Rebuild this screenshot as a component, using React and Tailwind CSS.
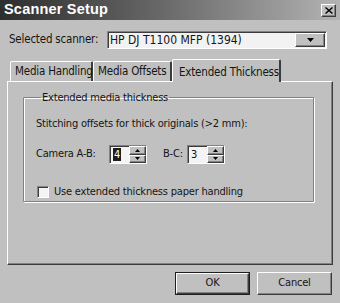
import React from 'react';

const raised =
  'border border-t-white border-l-white border-r-[#3c3c3c] border-b-[#3c3c3c] shadow-[inset_-1px_-1px_0_#828282]';
const sunken =
  'border border-t-[#828282] border-l-[#828282] border-r-white border-b-white shadow-[inset_1px_1px_0_#3c3c3c]';

function Spinner({ value, selected }) {
  return (
    <div className={`flex w-[38px] h-[19px] bg-[#f4f4f4] ${sunken}`}>
      <div className="flex-1 flex items-center pl-[3px]">
        <span className={selected ? 'bg-[#1e1e1e] text-white px-[1px] leading-[13px]' : 'leading-[13px]'}>
          {value}
        </span>
      </div>
      <div className="w-[17px] flex flex-col">
        <div className={`flex-1 bg-[#c0c0c0] flex items-center justify-center ${raised}`}>
          <svg width="5" height="3" viewBox="0 0 5 3">
            <path d="M2.5 0L5 3H0z" fill="#000" />
          </svg>
        </div>
        <div className={`flex-1 bg-[#c0c0c0] flex items-center justify-center ${raised}`}>
          <svg width="5" height="3" viewBox="0 0 5 3">
            <path d="M0 0h5L2.5 3z" fill="#000" />
          </svg>
        </div>
      </div>
    </div>
  );
}

function Tab({ label, active, width }) {
  if (active) {
    return (
      <div
        className="relative z-10 -mb-px h-[23px] bg-[#c0c0c0] border-t border-l border-white border-r-2 border-r-[#3c3c3c] rounded-t-[2px] flex items-start pl-[6px] pt-[4px] whitespace-nowrap text-[11.5px]"
        style={{ width }}
      >
        {label}
      </div>
    );
  }
  return (
    <div
      className="h-[20px] bg-[#c0c0c0] border-t border-l border-white border-r-2 border-r-[#3c3c3c] rounded-t-[2px] flex items-center pl-[4px] whitespace-nowrap text-[11.5px]"
      style={{ width }}
    >
      {label}
    </div>
  );
}

export default function App() {
  return (
    <div className="w-[340px] h-[303px] bg-[#c0c0c0] text-[#151515] text-[11px] tracking-[-0.2px] font-['DejaVu_Sans_Condensed','DejaVu_Sans',sans-serif] flex flex-col overflow-hidden select-none">
      <div className="h-[20px] flex items-center justify-between pl-[4px] pr-[4px] bg-linear-to-r from-[#2e2e2e] via-[#6c6c6c] to-[#b4b4b4]">
        <span className="text-white font-bold text-[14.5px] font-['Liberation_Sans',Arial,sans-serif] tracking-[0.2px]">Scanner Setup</span>
        <div className={`w-[15px] h-[13px] bg-[#c0c0c0] flex items-center justify-center ${raised}`}>
          <svg width="8" height="7" viewBox="0 0 8 7">
            <path d="M0.5 0.5L7.5 6.5M7.5 0.5L0.5 6.5" stroke="#000" strokeWidth="1.4" />
          </svg>
        </div>
      </div>

      <div className="mt-[11px] ml-[9px] flex items-center h-[18px]">
        <span className="w-[98px] text-[11.5px]">Selected scanner:</span>
        <div className={`w-[220px] h-[18px] bg-[#f2f2f2] flex items-center justify-between ${sunken}`}>
          <span className="pl-[2px] text-[12px] tracking-normal">HP DJ T1100 MFP (1394)</span>
          <div className={`w-[30px] h-[14px] mr-[1px] bg-[#c0c0c0] flex items-center justify-center ${raised}`}>
            <svg width="7" height="4" viewBox="0 0 7 4">
              <path d="M0 0h7L3.5 4z" fill="#000" />
            </svg>
          </div>
        </div>
      </div>

      <div className="mt-[10px] mx-[7px] flex items-end pl-[3px] h-[22px]">
        <Tab label="Media Handling" width={83} />
        <Tab label="Media Offsets" width={79} />
        <Tab label="Extended Thickness" width={109} active />
      </div>

      <div className="mx-[7px] h-[184px] border-t border-l border-white border-r border-b border-r-[#3c3c3c] border-b-[#3c3c3c] shadow-[inset_-1px_-1px_0_#828282]">
        <fieldset className="mt-[9px] ml-[15px] w-[291px] h-[111px] border border-[#828282] shadow-[1px_1px_0_#fff,inset_1px_1px_0_#fff] pl-[12px] rounded-[1px]">
          <legend className="ml-[5px] px-[1px] leading-[13px]">Extended media thickness</legend>
          <div className="mt-[13px] leading-[14px]">Stitching offsets for thick originals (&gt;2 mm):</div>
          <div className="mt-[14px] flex items-center">
            <span className="w-[73px]">Camera A-B:</span>
            <Spinner value="4" selected />
            <span className="ml-[16px] w-[24px]">B-C:</span>
            <Spinner value="3" />
          </div>
          <div className="mt-[20px] flex items-center">
            <div className={`w-[12px] h-[12px] bg-[#f4f4f4] ml-[1px] ${sunken}`} />
            <span className="ml-[5px]">Use extended thickness paper handling</span>
          </div>
        </fieldset>
      </div>

      <div className="mt-[7px] flex justify-end pr-[8px] gap-[7px]">
        <div className="w-[75px] h-[23px] border border-[#1e1e1e]">
          <div className={`w-full h-full flex items-center justify-center ${raised}`}>OK</div>
        </div>
        <div className={`w-[75px] h-[23px] flex items-center justify-center ${raised}`}>Cancel</div>
      </div>
    </div>
  );
}
